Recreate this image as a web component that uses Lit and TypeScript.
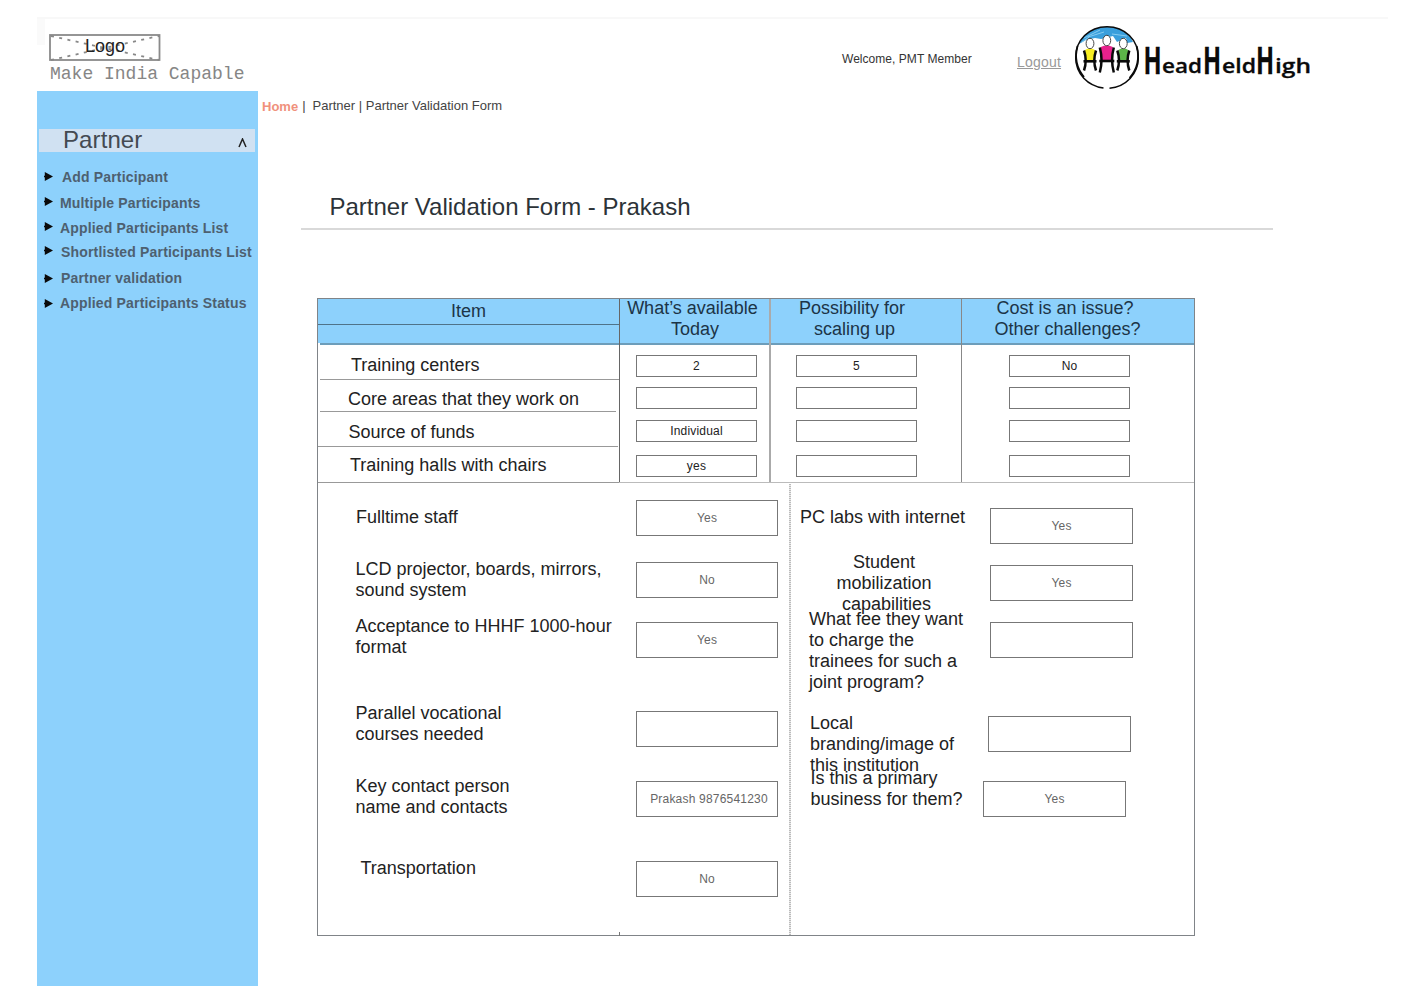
import { LitElement, html, css, svg } from "lit";
import { customElement, property } from "lit/decorators.js";

const SANS = css`"Liberation Sans", Arial, sans-serif`;

/** Round badge with three figures, followed by the organisation name. */
@customElement("brand-mark")
class BrandMark extends LitElement {
  static styles = css`
    :host { display: block; width: 250px; height: 72px; }
    svg { display: block; }
    .word { font-family: "Open Sans", "Noto Sans", sans-serif; font-weight: 600; fill: #0a0a0a; stroke: #0a0a0a; stroke-width: .3px; }
    .small { font-size: 20px; }
    .tall { font-size: 37px; font-weight: 700; }
  `;

  private person(x: number, y: number, w: number, h: number, fill: string) {
    const l = x - w / 2, r = x + w / 2, m = y + 7 + h * 0.54;
    return svg`
      <path d="M${l + 1} ${y + 6.5} L${x - 2} ${y + 5} H${x + 2} L${r - 1} ${y + 6.5} L${r - 2} ${m} H${l + 2} Z" fill=${fill}/>
      <ellipse cx=${x} cy=${y} rx="3.9" ry="5.2" fill="#fff" stroke="#333" stroke-width="0.9"/>
      <path d="M${l} ${y + 7} Q${l + 3.4} ${y + 7 + h / 2} ${l} ${y + 7 + h} M${r} ${y + 7} Q${r - 3.4} ${y + 7 + h / 2} ${r} ${y + 7 + h}" fill="none" stroke="#0a0a0a" stroke-width="2.5"/>
      <path d="M${l - 0.5} ${m} H${r + 0.5}" stroke="#0a0a0a" stroke-width="2.6"/>`;
  }

  render() {
    return html`<svg width="250" height="72" viewBox="1070 20 250 72" role="img" aria-label="HeadHeldHigh">
      <path d="M1079 44 C1083 34 1093 27 1106 27 C1119 27 1129 32 1133 42 L1127 43 L1126 38 L1117 42 L1113 36 L1101 39 L1095 38 L1086 40 Z" fill="#3a9fdc"/>
      <path d="M1084 38 L1100 30 M1088 37 L1104 32 M1112 34 L1127 36 M1082 42 L1089 37" stroke="#8fd0f2" stroke-width="0.9" fill="none"/>
      <path d="M1103.5 88 C1088 86 1075.7 74 1075.7 57.5 C1075.7 40 1089 26.7 1107 26.7 C1125 26.7 1138.3 40 1138.3 57.5 C1138.3 74 1126 86.5 1109.5 88.3" fill="none" stroke="#0a0a0a" stroke-width="1.5"/>
      <path d="M1077.5 46 C1074.5 57 1076.5 68 1084 77 M1136.7 46 C1139.8 58 1137.5 69 1129.5 78" fill="none" stroke="#0a0a0a" stroke-width="1.8"/>
      ${this.person(1090, 43.5, 12, 20, "#f8ee22")}
      ${this.person(1106.8, 40.5, 14, 25, "#e8218c")}
      ${this.person(1123.3, 43.5, 12, 20, "#5cb548")}
      <text class="word tall" transform="translate(1143.5 73.5) scale(.64 1)">H</text>
      <text class="word small" x="1162" y="73" textLength="40" lengthAdjust="spacingAndGlyphs">ead</text>
      <text class="word tall" transform="translate(1203 73.5) scale(.64 1)">H</text>
      <text class="word small" x="1222" y="73" textLength="34" lengthAdjust="spacingAndGlyphs">eld</text>
      <text class="word tall" transform="translate(1256 73.5) scale(.64 1)">H</text>
      <text class="word small" x="1275" y="73" textLength="36" lengthAdjust="spacingAndGlyphs">igh</text>
    </svg>`;
  }
}

@customElement("app-header")
class AppHeader extends LitElement {
  static styles = css`
    :host { display: flex; box-sizing: border-box; width: 1351px; height: 74px; margin-left: 37px; border-top: 2px solid #f8f8f8; font-family: ${SANS}; }
    .edge { width: 8px; height: 26px; background: #fafafa; }
    .left { width: 797px; padding: 15px 0 0 4px; box-sizing: border-box; }
    .logo { display: grid; width: 112px; height: 28px; }
    .logo > * { grid-area: 1 / 1; }
    .logo svg { display: block; }
    .name { justify-self: center; align-self: center; font-size: 18px; line-height: 21px; color: #222; margin: 0 0 3px 0; }
    .tag { font: 18px/22px "Liberation Mono", "Courier New", monospace; color: #868686; white-space: pre; padding: 1px 0 0 1px; }
    .welcome { width: 175px; font-size: 12px; line-height: 14px; letter-spacing: .04px; color: #333; padding-top: 33px; }
    .logout { width: 53px; font-size: 14px; line-height: 16px; letter-spacing: .2px; color: #999; padding-top: 35px; }
    .logout a { color: inherit; }
    brand-mark { margin-top: 1px; }
  `;
  render() {
    return html`
      <div class="edge"></div>
      <div class="left">
        <div class="logo">
          <svg width="112" height="28" viewBox="0 0 112 28">
            <rect x="1" y="1" width="109.5" height="25" fill="#fff" stroke="#8a8a8a" stroke-width="1.8"/>
            <path d="M2 2 L110 26 M2 26 L110 2" stroke="#888" stroke-width="1.8" stroke-dasharray="3 5.4"/>
          </svg>
          <div class="name">Logo</div>
        </div>
        <div class="tag">Make India Capable</div>
      </div>
      <div class="welcome">Welcome, PMT Member</div>
      <div class="logout"><a href="#">Logout</a></div>
      <brand-mark></brand-mark>`;
  }
}

@customElement("side-menu")
class SideMenu extends LitElement {
  static styles = css`
    :host { display: block; box-sizing: border-box; width: 221px; height: 895px; background: #8dd1fc; padding: 38px 2px 0; font-family: ${SANS}; }
    .head { display: flex; justify-content: space-between; height: 23px; width: 216px; background: #d0e1f2; color: #444a52; }
    .head b { font-weight: 400; font-size: 24px; line-height: 21px; letter-spacing: .1px; padding-left: 24px; }
    .head svg { margin: 9px 8px 0 0; }
    ul { list-style: none; margin: 0; padding: 0; }
    li { display: flex; height: 16px; font-size: 14px; line-height: 16px; font-weight: 700; letter-spacing: .17px; color: #4d6070; white-space: nowrap; margin-top: 9px; }
    li svg { width: 9px; height: 9px; margin: 3px 7px 0 5px; flex: none; }
    .add { margin-top: 17px; }
    .add svg { margin-right: 9px; }
    .multi { margin-top: 10px; }
    .multi svg, .applied svg { margin-top: 2px; }
    .short { margin-top: 8px; }
    .short svg { margin-top: 2px; }
    .valid { margin-top: 10px; }
    .short svg, .valid svg { margin-right: 8px; }
    .valid svg, .status svg { margin-top: 4px; }
  `;
  private items = [
    ["add", "Add Participant"], ["multi", "Multiple Participants"], ["applied", "Applied Participants List"],
    ["short", "Shortlisted Participants List"], ["valid", "Partner validation"], ["status", "Applied Participants Status"],
  ];
  render() {
    return html`
      <div class="head"><b>Partner</b>
        <svg width="9" height="10" viewBox="0 0 9 10"><path d="M1 9 L4.5 1 L8 9" fill="none" stroke="#222" stroke-width="1.5"/></svg>
      </div>
      <ul>${this.items.map(([k, t]) => html`<li class=${k}>
        <svg viewBox="0 0 9 9"><path d="M.8 0 L9 4.5 L.8 9 V5.2 H0 V3.8 H.8 Z" fill="#0a0a0a"/></svg>${t}</li>`)}
      </ul>`;
  }
}

@customElement("value-box")
class ValueBox extends LitElement {
  static styles = css`
    :host { display: flex; align-items: center; justify-content: center; box-sizing: border-box; border: 1px solid #777; background: #fff; font: 12px/14px ${SANS}; letter-spacing: .2px; white-space: nowrap; flex: none; }
  `;
  @property() value = "";
  render() { return html`${this.value}`; }
}

@customElement("validation-table")
class ValidationTable extends LitElement {
  static styles = css`
    :host { display: block; box-sizing: border-box; width: 878px; height: 638px; border: 1px solid #808488; font: 18px/21px ${SANS}; color: #222; }
    .top { display: flex; height: 184px; box-sizing: border-box; border-bottom: 1px solid #bbb; background: linear-gradient(#8dd1fc 44px, #fff 44px); }
    .col { box-sizing: border-box; border-right: 1px solid #888; color: #222; }
    .items { width: 302px; border-color: #666; }
    .today { width: 151px; border-right: 2px solid #aaa; }
    .scale { width: 191px; }
    .cost { width: 232px; border: 0; }
    .th { height: 46px; box-sizing: border-box; border-bottom: 2px solid #6d9dba; color: #1c3447; text-align: center; white-space: nowrap; }
    .th div + div { text-indent: 5px; }
    .today .th { padding-right: 4px; margin-top: -1px; height: 47px; }
    .scale .th { padding-right: 28px; margin-top: -1px; height: 47px; }
    .cost .th { padding-right: 26px; margin-top: -1px; height: 47px; }
    .item { height: 26px; box-sizing: border-box; border-bottom: 1px solid #4f7389; padding-top: 1px; line-height: 22px; text-align: center; color: #1c3447; }
    .blank { height: 20px; box-sizing: border-box; border-bottom: 2px solid #6d9dba; margin-left: 2px; }
    .row { box-sizing: border-box; border-bottom: 1px solid #999; white-space: nowrap; }
    .r0 { height: 35px; padding: 10px 0 0 31px; margin-left: 2px; }
    .r1 { height: 32px; padding: 9px 0 0 28px; margin: 0 3px 0 2px; }
    .r2 { height: 35px; padding: 10px 0 0 30.5px; margin-right: 1px; }
    .r3 { height: 36px; padding: 8px 0 0 32px; }
    .col value-box { width: 121px; height: 22px; margin: 10px 0 0 16px; }
    .col value-box + value-box { margin-top: 10px; }
    .col value-box:nth-of-type(3) { margin-top: 11px; }
    .col value-box:nth-of-type(4) { margin-top: 13px; }
    .col.scale value-box { margin-left: 25px; }
    .col.cost value-box { margin-left: 47px; }

    .bottom { display: flex; height: 452px; }
    .labels > div, .side > div { white-space: nowrap; }
    .labels { width: 318px; }
    .labels > div { margin-left: 37.5px; height: 42px; }
    .labels .l0 { margin-top: 24px; margin-left: 38px; height: 21px; }
    .labels .l1 { margin-top: 31px; }
    .labels .l2 { margin-top: 15px; }
    .labels .l3 { margin-top: 45px; }
    .labels .l4 { margin-top: 31px; }
    .labels .l5 { margin-top: 40px; margin-left: 42.5px; }
    .boxes { width: 153px; box-sizing: border-box; }
    value-box.big { box-sizing: border-box; width: 143px; height: 36px; color: #666; }
    .boxes value-box.big { width: 142px; }
    .b0 { margin-top: 17px; }
    .b1 { margin-top: 26px; }
    .b2 { margin-top: 24px; }
    .b3 { margin-top: 53px; }
    .b4 { margin-top: 34px; padding-left: 4px; }
    .b5 { margin-top: 44px; }
    .tick { height: 4px; width: 1px; background: #777; margin: 35px 0 0 -17px; }
    .rule { width: 2px; margin-top: 1px; background: repeating-linear-gradient(#bbb 0 1px, #eaeaea 1px 2px); }
    .side { width: 199px; }
    .side .s0 { margin: 24px 0 0 9px; }
    .side .s1 { margin: 24px 0 0 33px; width: 120px; text-align: center; height: 63px; }
    .side .s1 div + div + div { text-indent: 5px; }
    .side .s2 { margin: -6px 0 0 18px; height: 84px; }
    .side .s3 { margin: 20px 0 0 19px; height: 63px; }
    .side .s4 { margin: -8px 0 0 19.5px; height: 42px; }
    .c0 { margin-top: 25px; }
    .c1 { margin-top: 21px; }
    .c2 { margin-top: 21px; }
    .c3 { margin: 58px 0 0 -2px; }
    .c4 { margin: 29px 0 0 -7px; }
  `;

  private columns = [
    { key: "today", head: ["What’s available", "Today"], values: ["2", "", "Individual", "yes"] },
    { key: "scale", head: ["Possibility for", "scaling up"], values: ["5", "", "", ""] },
    { key: "cost", head: ["Cost is an issue?", "Other challenges?"], values: ["No", "", "", ""] },
  ];
  private rows = ["Training centers", "Core areas that they work on", "Source of funds", "Training halls with chairs"];
  private left = [
    [["Fulltime staff"], "Yes"],
    [["LCD projector, boards, mirrors,", "sound system"], "No"],
    [["Acceptance to HHHF 1000-hour", "format"], "Yes"],
    [["Parallel vocational", "courses needed"], ""],
    [["Key contact person", "name and contacts"], "Prakash 9876541230"],
    [["Transportation"], "No"],
  ] as [string[], string][];
  private right = [
    [["PC labs with internet"], "Yes"],
    [["Student", "mobilization", "capabilities"], "Yes"],
    [["What fee they want", "to charge the", "trainees for such a", "joint program?"], ""],
    [["Local", "branding/image of", "this institution"], ""],
    [["Is this a primary", "business for them?"], "Yes"],
  ] as [string[], string][];

  private lines(text: string[]) { return text.map((t) => html`<div>${t}</div>`); }

  render() {
    return html`
      <div class="top">
        <div class="col items">
          <div class="item">Item</div>
          <div class="blank"></div>
          ${this.rows.map((t, i) => html`<div class="row r${i}">${t}</div>`)}
        </div>
        ${this.columns.map((c) => html`<div class="col ${c.key}">
          <div class="th">${this.lines(c.head)}</div>
          ${c.values.map((v) => html`<value-box .value=${v}></value-box>`)}
        </div>`)}
      </div>
      <div class="bottom">
        <div class="labels">${this.left.map(([t], i) => html`<div class="l${i}">${this.lines(t)}</div>`)}</div>
        <div class="boxes">
          ${this.left.map(([, v], i) => html`<value-box class="big b${i}" .value=${v}></value-box>`)}
          <div class="tick"></div>
        </div>
        <div class="rule"></div>
        <div class="side">${this.right.map(([t], i) => html`<div class="s${i}">${this.lines(t)}</div>`)}</div>
        <div>${this.right.map(([, v], i) => html`<value-box class="big c${i}" .value=${v}></value-box>`)}</div>
      </div>`;
  }
}

@customElement("app-root")
class AppRoot extends LitElement {
  static styles = css`
    :host { display: block; box-sizing: border-box; width: 1416px; height: 986px; padding-top: 17px; overflow: hidden; background: #fff; font-family: ${SANS}; }
    .body { display: flex; padding-left: 37px; }
    .crumbs { display: flex; font-size: 13px; line-height: 15px; height: 16px; color: #444; padding: 7px 0 0 3px; white-space: pre; }
    .home { color: #f0917c; font-weight: 700; padding: 1px 4px 0 1px; }
    .sep { padding-right: 7px; }
    h1 { margin: 79px 0 0 43px; width: 972px; height: 37px; box-sizing: border-box; padding-left: 28.5px; border-bottom: 2px solid #d9d9d9; font-weight: 400; font-size: 24px; line-height: 28px; color: #2c3338; }
    validation-table { margin: 68px 0 0 59px; }
  `;
  render() {
    return html`
      <app-header></app-header>
      <div class="body">
        <side-menu></side-menu>
        <main>
          <div class="crumbs"><span class="home">Home</span><span class="sep">|</span><span>Partner | Partner Validation Form</span></div>
          <h1>Partner Validation Form - Prakash</h1>
          <validation-table></validation-table>
        </main>
      </div>`;
  }
}
